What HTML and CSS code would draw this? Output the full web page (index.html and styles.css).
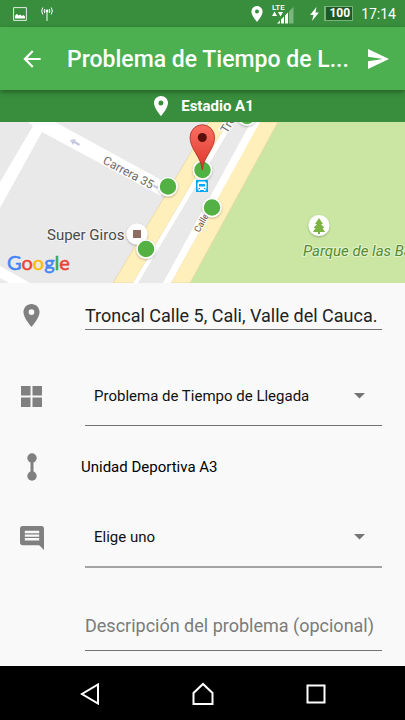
FILE: index.html
```html
<!DOCTYPE html>
<html lang="es">
<head>
<meta charset="utf-8">
<meta name="viewport" content="width=device-width, initial-scale=1">
<title>Problema de Tiempo de Llegada</title>
<link rel="stylesheet" href="styles.css">
</head>
<body>
<div class="screen">
  <div class="status">
    <svg class="status-picture" width="14" height="14" viewBox="0 0 14 14"><path d="M.6.6h12.8v12.8H.6z" fill="none" stroke="#fff" stroke-opacity=".85"/><path d="M2 11.500V9l1-1.500 1-.5 1.500 1.500L7 7.500 9 9l1.500-1 1.500 1.500v2z" fill="#fff"/></svg>
    <svg class="status-antenna" width="12" height="14" viewBox="0 0 12 14"><path d="M6 4v10M3.800 2q-1.300 2 0 4M8.200 2q1.300 2 0 4M1.800.5q-2.300 3.500 0 7M10.200.5q2.300 3.500 0 7" fill="none" stroke="#fff"/><circle cx="6" cy="4" r="1.400" fill="#fff"/></svg>
    <span class="spacer"></span>
    <svg class="status-pin" width="12" height="16" viewBox="5 2 14 20"><path fill="#fff" d="M12 2C8.130 2 5 5.130 5 9c0 5.250 7 13 7 13s7-7.750 7-13c0-3.870-3.130-7-7-7zm0 9.500a2.500 2.500 0 1 1 0-5 2.500 2.500 0 0 1 0 5z"/></svg>
    <svg class="status-signal" width="22" height="20" viewBox="0 0 22 20"><text class="lte" x="0" y="6">LTE</text><path fill="#fff" d="M0 12l2.500-4.500L5 12zM6 8h5l-2.500 4.500zM5 19.500l3-3v3zM9 19.500v-4l3-3v7zM13 19.500v-8l3-3v11z"/><path fill="#fff" fill-opacity=".35" d="M17 19.500V7.500l4.500-4.500v16.500z"/></svg>
    <svg class="status-bolt" width="9" height="14" viewBox="0 0 9 14"><path fill="#fff" d="M6.500 0L0 8h3.500L2 14l7-8.500H5.500z"/></svg>
    <span class="battery">100</span>
    <span class="clock">17:14</span>
  </div>

  <header class="appbar">
    <button class="icon-button" type="button" aria-label="Volver"><svg width="26" height="26" viewBox="0 0 24 24"><path fill="#fff" d="M20 11H7.830l5.590-5.590L12 4l-8 8 8 8 1.410-1.410L7.830 13H20z"/></svg></button>
    <h1 class="title">Problema de Tiempo de L...</h1>
    <button class="icon-button" type="button" aria-label="Enviar"><svg width="21" height="20" viewBox="2 3 21 18" preserveAspectRatio="none"><path fill="#fff" d="M2.010 21L23 12 2.010 3 2 10l15 2-15 2z"/></svg></button>
  </header>

  <div class="stop">
    <svg width="14" height="20" viewBox="5 2 14 20"><path fill="#fff" d="M12 2C8.130 2 5 5.130 5 9c0 5.250 7 13 7 13s7-7.750 7-13c0-3.870-3.130-7-7-7zm0 9.500a2.500 2.500 0 1 1 0-5 2.500 2.500 0 0 1 0 5z"/></svg>
    <span>Estadio A1</span>
  </div>

  <svg class="map" viewBox="0 0 405 161" preserveAspectRatio="xMidYMid slice" role="img" aria-label="Mapa">
    <defs>
      <linearGradient id="pin" x1="0" y1="0" x2="0" y2="1"><stop offset="0" stop-color="#fb7064"/><stop offset="1" stop-color="#dc3528"/></linearGradient>
      <filter id="shade" x="-30%" y="-30%" width="160%" height="160%"><feDropShadow dx="0" dy="1" stdDeviation="1" flood-opacity=".3"/></filter>
    </defs>
    <path fill="#e9e9e9" d="M0 0h405v161H0z"/>
    <path fill="#cbe6a3" d="M278 0h127v161H190z"/>
    <path fill="#fff" d="M28 0h27l112 61-6 13L42 10 0 86V60L33 4zM0 144l30 17H9l-9-5z"/>
    <path fill="#ffefbb" stroke="#e8d3a0" stroke-width=".7" d="M209 0L113 161h20L228 0zM259 0l-88 161h19L278 0z"/>
    <path fill="#fff" d="M228 0l-95 161h5L234 0zM251 0l-88 161h8L260 0z"/>
    <path fill="#c5c7de" d="M70 18l6-1-1 2 5 3-1 2-5-3-1 2zM148 61l6-1-1 2 5 3-1 2-5-3-1 2z"/>
    <g class="road-labels">
      <text transform="translate(102 41) rotate(28)">Carrera 35</text>
      <text transform="translate(227 12) rotate(-59)">Troncal</text>
      <text class="brown" transform="translate(199 111) rotate(-60)">Calle</text>
    </g>
    <text class="place" x="47" y="118">Super Giros</text>
    <g filter="url(#shade)"><circle cx="137" cy="112" r="10.500" fill="#fff"/><circle cx="319" cy="103.500" r="10.500" fill="#fff"/></g>
    <path fill="#8d6e63" d="M133 108h8v8h-8z"/>
    <path fill="#7cb342" d="M319 96l4 6h-2l3.500 4h-2l2.500 4h-5v2h-2v-2h-5l2.500-4h-2l3.500-4h-2z"/>
    <text class="park" x="303" y="134">Parque de las Banderas</text>
    <g fill="#52b043" stroke="#fff" stroke-width="1.500" filter="url(#shade)">
      <circle cx="247" cy="-6" r="9"/><circle cx="168" cy="64.500" r="9"/><circle cx="202.500" cy="48" r="9"/><circle cx="212" cy="85.500" r="9"/><circle cx="146" cy="127" r="9"/>
    </g>
    <path fill="#03a9f4" d="M196 58h12v12h-12z"/>
    <path fill="#fff" d="M199 59.500h6l1.500 1.500v6l-1 1v1h-1.500v-1h-4v1H198.500v-1l-1-1v-6z"/>
    <path fill="#03a9f4" d="M199 62h6v2.500h-6zM198.500 66h1.500v1.200h-1.500zM204 66h1.500v1.200H204z"/>
    <path fill="url(#pin)" stroke="#a92b22" stroke-width=".8" d="M202.300 48c-1-13-12.300-21-12.300-32.500a12.300 12.800 0 0 1 24.600 0C214.600 27 203.300 35 202.300 48z"/>
    <circle cx="202.300" cy="15.500" r="4.500" fill="#5b0f0b"/>
    <text class="google" x="7" y="148"><tspan class="blue">G</tspan><tspan class="red">o</tspan><tspan class="yellow">o</tspan><tspan class="blue">g</tspan><tspan class="green">l</tspan><tspan class="red">e</tspan></text>
  </svg>

  <form class="form">
    <div class="row row-address">
      <label class="icon" for="address" aria-label="Dirección"><svg width="17" height="23" viewBox="5 2 14 20"><path d="M12 2C8.130 2 5 5.130 5 9c0 5.250 7 13 7 13s7-7.750 7-13c0-3.870-3.130-7-7-7zm0 9.500a2.500 2.500 0 1 1 0-5 2.500 2.500 0 0 1 0 5z"/></svg></label>
      <input class="field" id="address" type="text" value="Troncal Calle 5, Cali, Valle del Cauca.">
    </div>
    <div class="row row-category">
      <label class="icon" for="category" aria-label="Categoría"><svg width="21" height="21" viewBox="0 0 21 21"><path d="M0 0h9.500v9.500H0zM11.500 0H21v9.500h-9.500zM0 11.500h9.500V21H0zM11.500 11.500H21V21h-9.500z"/></svg></label>
      <div class="picker">
        <select class="field" id="category"><option>Problema de Tiempo de Llegada</option></select>
        <svg class="arrow" width="11" height="6" viewBox="0 0 11 6"><path d="M0 0h11L5.500 5.500z"/></svg>
      </div>
    </div>
    <div class="row row-stop">
      <span class="icon"><svg width="10" height="28" viewBox="0 0 10 28"><circle cx="5" cy="5" r="4.700"/><circle cx="5" cy="23" r="4.700"/><path d="M3.500 5h3v18h-3z"/></svg></span>
      <span class="stop-name">Unidad Deportiva A3</span>
    </div>
    <div class="row row-detail">
      <label class="icon" for="detail" aria-label="Detalle"><svg width="24" height="24" viewBox="2 2 20 20"><path d="M21.990 4c0-1.100-.89-2-1.990-2H4c-1.100 0-2 .9-2 2v12c0 1.100.9 2 2 2h14l4 4-.01-18zM18 14H6v-2h12v2zm0-3H6V9h12v2zm0-3H6V6h12v2z"/></svg></label>
      <div class="picker picker-light">
        <select class="field" id="detail"><option>Elige uno</option></select>
        <svg class="arrow" width="11" height="6" viewBox="0 0 11 6"><path d="M0 0h11L5.500 5.500z"/></svg>
      </div>
    </div>
    <div class="row row-description">
      <span class="icon"></span>
      <input class="field" type="text" aria-label="Descripción del problema" placeholder="Descripción del problema (opcional)">
    </div>
  </form>

  <nav class="navbar">
    <button type="button" aria-label="Atrás"><svg width="20" height="22" viewBox="0 0 20 22"><path d="M18 1.500v19L2 11z"/></svg></button>
    <button type="button" aria-label="Inicio"><svg width="22" height="24" viewBox="1 0 22 24"><path d="M2.500 22V11L12 2l9.500 9v11z"/></svg></button>
    <button type="button" aria-label="Recientes"><svg width="20" height="20" viewBox="0 0 20 20"><path d="M1.500 1.500h17v17h-17z"/></svg></button>
  </nav>
</div>
</body>
</html>
```
FILE: styles.css
```css
* {
  box-sizing: border-box;
}

body {
  margin: 0;
  font-family: Roboto, "Liberation Sans", sans-serif;
  background: #f9f9f9;
  color: #111;
}

svg {
  display: block;
  flex: none;
}

button {
  padding: 0;
  border: 0;
  background: none;
}

.screen {
  display: flex;
  flex-direction: column;
  min-height: 100vh;
}

.status {
  display: flex;
  align-items: center;
  height: 27px;
  padding: 0 9px 0 13px;
  background: #388e3c;
  color: #fff;
}

.status-antenna {
  margin-left: 14px;
}

.spacer {
  flex: 1;
}

.status-signal {
  margin: 0 16px 0 9px;
}

.lte {
  font-size: 8px;
  font-weight: 500;
  fill: #fff;
}

.battery {
  margin: 0 8px 0 5px;
  padding: 0 2px 0 3px;
  border: 1px solid #79b37c;
  border-left-width: 2px;
  background: #1f5a24;
  font-size: 12px;
  font-weight: 700;
  line-height: 13px;
}

.clock {
  font-size: 14px;
}

.appbar {
  position: relative;
  display: flex;
  align-items: center;
  height: 63px;
  padding: 0 16px 0 19px;
  background: #4caf50;
  box-shadow: 0 2px 5px rgba(0, 0, 0, 0.35);
}

.title {
  flex: 1;
  min-width: 0;
  margin: 0 12px 0 22px;
  padding-top: 2px;
  overflow: hidden;
  color: #fff;
  font-size: 23px;
  font-weight: 500;
  line-height: 32px;
  text-overflow: ellipsis;
  white-space: nowrap;
}

.stop {
  display: flex;
  align-items: center;
  justify-content: center;
  gap: 13px;
  height: 32px;
  padding-left: 3px;
  background: #388e3c;
  color: #fff;
  font-size: 15px;
  font-weight: 700;
}

.map {
  width: 100%;
  height: 161px;
}

.road-labels {
  font-size: 12px;
  fill: #6b6b6b;
  stroke: #fff;
  stroke-width: 2px;
  paint-order: stroke;
}

.road-labels .brown {
  font-size: 9px;
  fill: #6d4c41;
}

.place {
  font-size: 15px;
  fill: #4a4a4a;
  stroke: #f4f4f4;
  stroke-width: 2px;
  paint-order: stroke;
}

.park {
  font-size: 15px;
  font-style: italic;
  fill: #558b2f;
  stroke: #e4f2cf;
  stroke-width: 2px;
  paint-order: stroke;
}

.google {
  font-family: Lato, sans-serif;
  font-size: 20px;
  stroke-width: 0.5px;
}

.blue {
  fill: #4285f4;
  stroke: #4285f4;
}

.red {
  fill: #ea4335;
  stroke: #ea4335;
}

.yellow {
  fill: #fbbc05;
  stroke: #fbbc05;
}

.green {
  fill: #34a853;
  stroke: #34a853;
}

.form {
  flex: 1;
  background: #f9f9f9;
}

.row {
  display: grid;
  grid-template-columns: 63px 1fr;
  column-gap: 22px;
  align-items: center;
  padding-right: 23px;
}

.row-address {
  height: 64px;
}

.row-category {
  height: 98px;
}

.row-stop {
  height: 44px;
  column-gap: 18px;
}

.row-detail {
  height: 97px;
}

.row-description {
  height: 80px;
}

.icon {
  display: flex;
  justify-content: center;
  fill: #808080;
}

.field {
  width: 100%;
  min-width: 0;
  margin: 0;
  border: 0;
  border-radius: 0;
  background: none;
  font-family: inherit;
  outline: 0;
}

input.field {
  padding: 0;
  border-bottom: 1px solid #737373;
  color: #222;
  font-size: 18px;
}

.row-address .field {
  height: 30px;
  padding-top: 2px;
}

.row-description .field {
  height: 50px;
}

.field::placeholder {
  color: #7b7b7b;
  opacity: 1;
}

.picker {
  display: flex;
  align-items: center;
  height: 60px;
  padding-right: 17px;
  border-bottom: 1px solid #737373;
}

.picker-light {
  border-bottom: 2px solid #a4a4a4;
}

select.field {
  height: 40px;
  padding: 0 0 0 9px;
  appearance: none;
  color: #111;
  font-size: 15px;
}

.arrow {
  fill: #757575;
}

.stop-name {
  color: #000;
  font-size: 15px;
}

.navbar {
  display: flex;
  align-items: center;
  justify-content: center;
  gap: 92px;
  height: 54px;
  padding-top: 2px;
  background: #000;
}

.navbar svg {
  fill: none;
  stroke: #fff;
  stroke-width: 2;
}
```
